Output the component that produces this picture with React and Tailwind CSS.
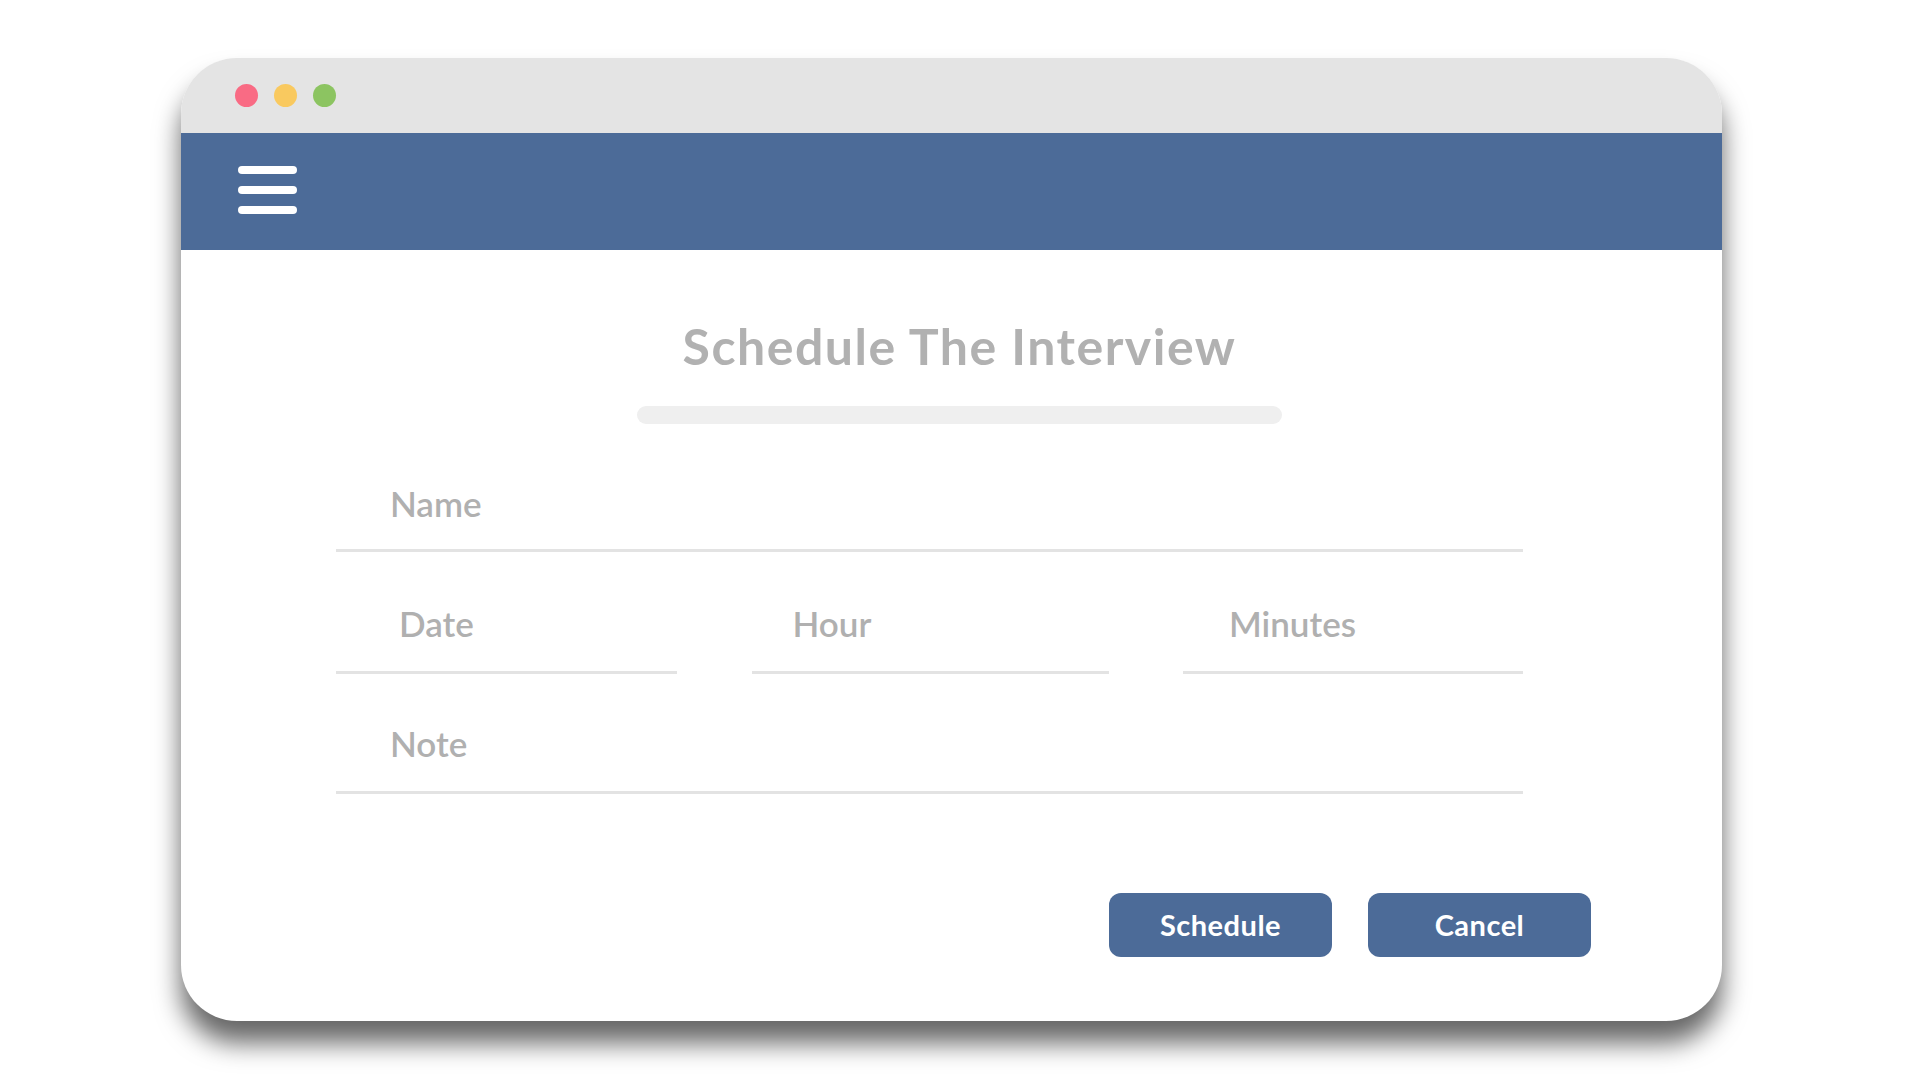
export default function App() {
  const font = { fontFamily: 'Lato, "Open Sans", sans-serif' };

  return (
    <div className="w-full h-[1080px] bg-white pt-[58px] pl-[181px]" style={font}>
      <div className="w-[1541px] h-[963px] rounded-[56px] overflow-hidden bg-white shadow-[0_22px_26px_rgba(0,0,0,0.6)] flex flex-col">
        {/* title bar */}
        <div className="h-[75px] bg-[#e4e4e4] flex items-center pl-[54px] gap-[16px] shrink-0">
          <span className="w-[23px] h-[23px] rounded-full bg-[#f96b84]"></span>
          <span className="w-[23px] h-[23px] rounded-full bg-[#f9c95f]"></span>
          <span className="w-[23px] h-[23px] rounded-full bg-[#8cc461]"></span>
        </div>

        {/* header */}
        <div className="h-[117px] bg-[#4c6b98] flex items-center pl-[57px] shrink-0">
          <div className="flex flex-col gap-[12px] mb-[3px]">
            <span className="block w-[59px] h-[8px] rounded-full bg-white"></span>
            <span className="block w-[59px] h-[8px] rounded-full bg-white"></span>
            <span className="block w-[59px] h-[8px] rounded-full bg-white"></span>
          </div>
        </div>

        {/* content */}
        <div className="flex flex-col">
          <div className="flex flex-col items-center pl-[16px] pt-[71px]">
            <h1 className="text-[50px] leading-[50px] font-bold text-[#b1b1b1] tracking-[1.5px]">
              Schedule The Interview
            </h1>
            <div className="mt-[35px] w-[645px] h-[18px] rounded-full bg-[#efefef]"></div>
          </div>

          <div className="ml-[155px] w-[1187px] flex flex-col">
            <div className="mt-[62px] pl-[54px] pb-[28px] border-b-[3px] border-[#e3e3e3]">
              <span className="block text-[35px] leading-[35px] font-semibold text-[#b0b0b0]">Name</span>
            </div>

            <div className="mt-[54px] flex justify-between">
              <div className="w-[341px] pl-[63px] pb-[30px] border-b-[3px] border-[#e3e3e3]">
                <span className="block text-[35px] leading-[35px] font-semibold text-[#b0b0b0]">Date</span>
              </div>
              <div className="w-[357px] pl-[41px] pb-[30px] border-b-[3px] border-[#e3e3e3]">
                <span className="block text-[35px] leading-[35px] font-semibold text-[#b0b0b0]">Hour</span>
              </div>
              <div className="w-[340px] pl-[46px] pb-[30px] border-b-[3px] border-[#e3e3e3]">
                <span className="block text-[35px] leading-[35px] font-semibold text-[#b0b0b0]">Minutes</span>
              </div>
            </div>

            <div className="mt-[52px] pl-[54px] pb-[30px] border-b-[3px] border-[#e3e3e3]">
              <span className="block text-[35px] leading-[35px] font-semibold text-[#b0b0b0]">Note</span>
            </div>
          </div>

          <div className="mt-[99px] flex justify-end gap-[36px] pr-[131px]">
            <button className="w-[223px] h-[64px] rounded-[12px] bg-[#4c6b98] text-white text-[29px] font-bold tracking-[0.5px]">
              Schedule
            </button>
            <button className="w-[223px] h-[64px] rounded-[12px] bg-[#4c6b98] text-white text-[29px] font-bold tracking-[0.5px]">
              Cancel
            </button>
          </div>
        </div>
      </div>
    </div>
  );
}
